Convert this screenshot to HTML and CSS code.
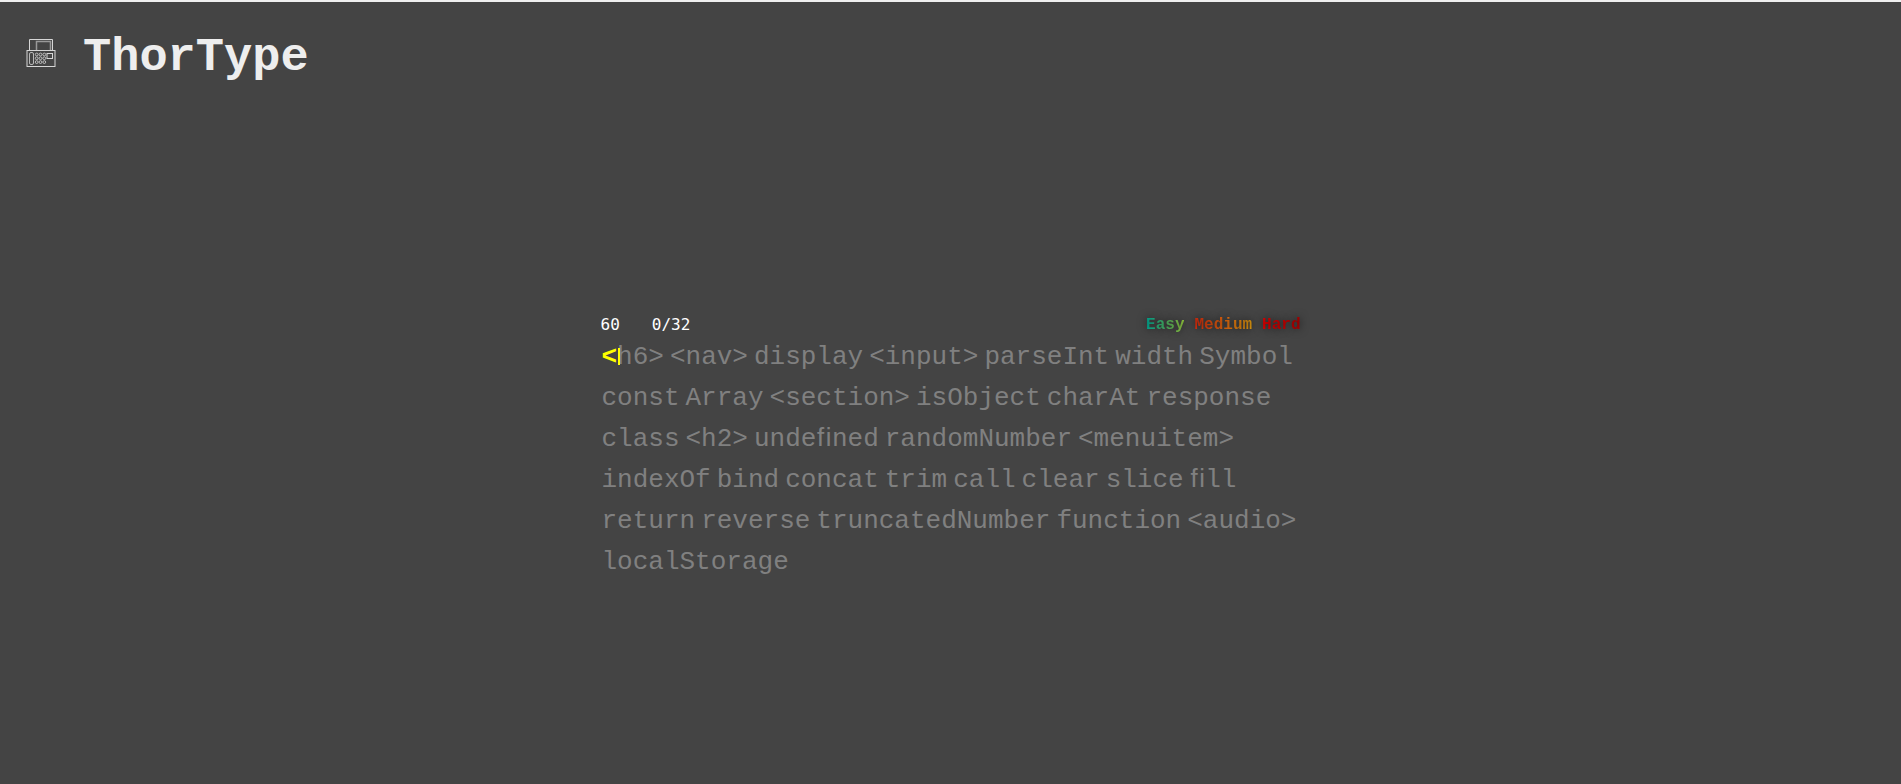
FILE: index.html
```html
<!DOCTYPE html>
<html lang="en">
<head>
<meta charset="utf-8">
<title>ThorType</title>
<link rel="stylesheet" href="styles.css">
</head>
<body>
<header class="header">
  <svg class="logo" viewBox="0 0 30 30" fill="none" stroke="#d6d6d6" aria-hidden="true">
    <path d="M3.5 12.5V1.500H26.500V12.500"/>
    <path d="M10.500 12V3.500H24.500V12" stroke="#999" stroke-width="1.500"/>
    <rect x="1" y="12.500" width="28" height="16"/>
    <rect x="3.500" y="14.500" width="4" height="12" rx="1.500" stroke-width=".8"/>
    <rect x="21" y="15.500" width="5.500" height="5"/>
    <g stroke-width=".8">
      <circle cx="10.700" cy="16.500" r="1.400"/><circle cx="14.500" cy="16.500" r="1.400"/><circle cx="18.300" cy="16.500" r="1.400"/>
      <circle cx="10.700" cy="20.300" r="1.400"/><circle cx="14.500" cy="20.300" r="1.400"/><circle cx="18.300" cy="20.300" r="1.400"/>
      <circle cx="10.700" cy="24.100" r="1.400"/><circle cx="14.500" cy="24.100" r="1.400"/><circle cx="18.300" cy="24.100" r="1.400"/>
    </g>
  </svg>
  <h1 class="title">ThorType</h1>
</header>
<main class="game">
  <div class="bar">
    <div class="stats"><span>60</span><span>0/32</span></div>
    <div class="levels">
      <button type="button" class="level easy">Easy</button>
      <button type="button" class="level medium">Medium</button>
      <button type="button" class="level hard">Hard</button>
    </div>
  </div>
  <div class="words">
    <span class="word"><span class="current">&lt;</span>h6&gt;</span>
    <span class="word">&lt;nav&gt;</span>
    <span class="word">display</span>
    <span class="word">&lt;input&gt;</span>
    <span class="word">parseInt</span>
    <span class="word">width</span>
    <span class="word">Symbol</span>
    <span class="word">const</span>
    <span class="word">Array</span>
    <span class="word">&lt;section&gt;</span>
    <span class="word">isObject</span>
    <span class="word">charAt</span>
    <span class="word">response</span>
    <span class="word">class</span>
    <span class="word">&lt;h2&gt;</span>
    <span class="word">undeﬁned</span>
    <span class="word">randomNumber</span>
    <span class="word">&lt;menuitem&gt;</span>
    <span class="word">indexOf</span>
    <span class="word">bind</span>
    <span class="word">concat</span>
    <span class="word">trim</span>
    <span class="word">call</span>
    <span class="word">clear</span>
    <span class="word">slice</span>
    <span class="word">ﬁll</span>
    <span class="word">return</span>
    <span class="word">reverse</span>
    <span class="word">truncatedNumber</span>
    <span class="word">function</span>
    <span class="word">&lt;audio&gt;</span>
    <span class="word">localStorage</span>
  </div>
</main>
</body>
</html>
```

FILE: styles.css
```css
* {
  box-sizing: border-box;
}

body {
  margin: 0;
  min-height: 100vh;
  border-top: 2px solid #f0f0f0;
  background: #444;
  color: #eee;
  font-family: "Liberation Mono", "DejaVu Sans Mono", monospace;
  font-size: 16px;
}

.header {
  display: flex;
  align-items: flex-start;
  gap: 27px;
  padding: 28px 26px 20px;
}

.logo {
  width: 30px;
  height: 30px;
  margin-top: 8px;
}

.title {
  margin: 0;
  font-size: 47px;
  line-height: 56px;
}

.game {
  max-width: 700px;
  margin: 207px auto 0;
}

.bar {
  display: flex;
  justify-content: space-between;
  line-height: 24px;
}

.stats {
  display: flex;
  gap: 32px;
  color: #fff;
  font-family: "DejaVu Sans Mono", "Liberation Mono", monospace;
}

.levels {
  display: flex;
  gap: 10px;
}

.level {
  padding: 0;
  border: 0;
  font: inherit;
  font-weight: bold;
  color: transparent;
  background-clip: text;
  -webkit-background-clip: text;
  text-shadow: 0 0 8px rgba(0, 0, 0, 0.6);
  cursor: pointer;
}

.easy {
  background-image: linear-gradient(to right, #00b09b, #96c93d);
}

.medium {
  background-image: linear-gradient(to right, #e52d10, #e8a010);
}

.hard {
  background-image: linear-gradient(to right, #f00000, #b00000);
}

.words {
  display: flex;
  flex-wrap: wrap;
  column-gap: 6px;
  padding-left: 1px;
  font-size: 26px;
  line-height: 41px;
  color: #808080;
}

.current {
  position: relative;
  color: #ff0;
  font-weight: bold;
}

.current::after {
  content: "";
  position: absolute;
  top: 6px;
  right: -3px;
  width: 2px;
  height: 17px;
  background: #ff0;
}
```
